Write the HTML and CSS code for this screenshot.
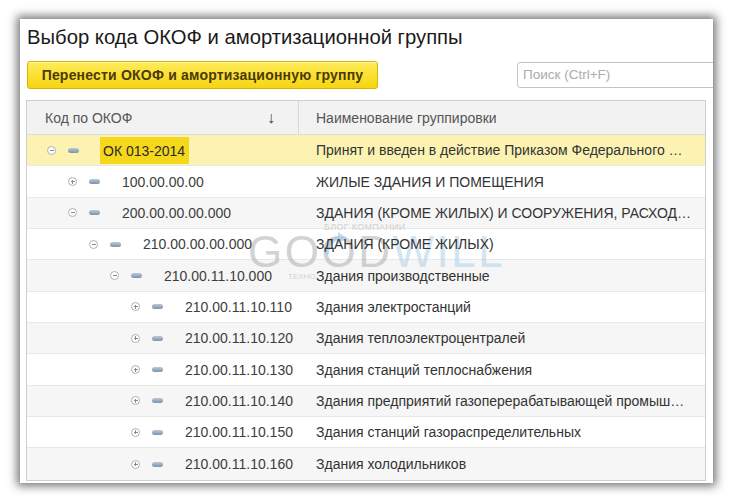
FILE: index.html
```html
<!DOCTYPE html>
<html lang="ru">
<head>
<meta charset="utf-8">
<title>Выбор кода ОКОФ</title>
<link rel="stylesheet" href="styles.css">
</head>
<body>
<div class="window">
  <h1 class="title">Выбор кода ОКОФ и амортизационной группы</h1>
  <div class="toolbar">
    <button class="btn-main">Перенести ОКОФ и амортизационную группу</button>
    <div class="search">Поиск (Ctrl+F)</div>
  </div>
  <div class="table">
    <div class="thead">
      <div class="th th-code"><span>Код по ОКОФ</span><span class="sort">↓</span></div>
      <div class="th th-name">Наименование группировки</div>
    </div>
    <div class="row sel">
      <div class="code lvl0"><span class="tg minus"></span><span class="pill"></span><span class="hl">ОК 013-2014</span></div>
      <div class="name"><span>Принят и введен в действие Приказом Федерального …</span></div>
    </div>
    <div class="row">
      <div class="code lvl1"><span class="tg plus"></span><span class="pill"></span><span class="txt">100.00.00.00</span></div>
      <div class="name"><span>ЖИЛЫЕ ЗДАНИЯ И ПОМЕЩЕНИЯ</span></div>
    </div>
    <div class="row alt">
      <div class="code lvl1"><span class="tg minus"></span><span class="pill"></span><span class="txt">200.00.00.00.000</span></div>
      <div class="name"><span>ЗДАНИЯ (КРОМЕ ЖИЛЫХ) И СООРУЖЕНИЯ, РАСХОД…</span></div>
    </div>
    <div class="row">
      <div class="code lvl2"><span class="tg minus"></span><span class="pill"></span><span class="txt">210.00.00.00.000</span></div>
      <div class="name"><span>ЗДАНИЯ (КРОМЕ ЖИЛЫХ)</span></div>
    </div>
    <div class="row alt">
      <div class="code lvl3"><span class="tg minus"></span><span class="pill"></span><span class="txt">210.00.11.10.000</span></div>
      <div class="name"><span>Здания производственные</span></div>
    </div>
    <div class="row">
      <div class="code lvl4"><span class="tg plus"></span><span class="pill"></span><span class="txt">210.00.11.10.110</span></div>
      <div class="name"><span>Здания электростанций</span></div>
    </div>
    <div class="row alt">
      <div class="code lvl4"><span class="tg plus"></span><span class="pill"></span><span class="txt">210.00.11.10.120</span></div>
      <div class="name"><span>Здания теплоэлектроцентралей</span></div>
    </div>
    <div class="row">
      <div class="code lvl4"><span class="tg plus"></span><span class="pill"></span><span class="txt">210.00.11.10.130</span></div>
      <div class="name"><span>Здания станций теплоснабжения</span></div>
    </div>
    <div class="row alt">
      <div class="code lvl4"><span class="tg plus"></span><span class="pill"></span><span class="txt">210.00.11.10.140</span></div>
      <div class="name"><span>Здания предприятий газоперерабатывающей промыш…</span></div>
    </div>
    <div class="row">
      <div class="code lvl4"><span class="tg plus"></span><span class="pill"></span><span class="txt">210.00.11.10.150</span></div>
      <div class="name"><span>Здания станций газораспределительных</span></div>
    </div>
    <div class="row alt">
      <div class="code lvl4"><span class="tg plus"></span><span class="pill"></span><span class="txt">210.00.11.10.160</span></div>
      <div class="name"><span>Здания холодильников</span></div>
    </div>
  </div>
  <div class="watermark">
    <div class="wm-top">БЛОГ КОМПАНИИ</div>
    <div class="wm-logo"><span class="wm-good">GOOD</span><span class="wm-will">WILL</span></div>
    <div class="wm-bottom">ТЕХНОЛОГИИ</div>
    <svg class="wm-arrow" width="24" height="24" viewBox="0 0 24 24">
      <path d="M3 22 C4 12 10 7 17 7" fill="none" stroke="#4a9be0" stroke-width="4" stroke-linecap="round"/>
      <path d="M14 1 L23 7 L14 13 Z" fill="#4a9be0"/>
    </svg>
  </div>
</div>
</body>
</html>
```

FILE: styles.css
```css
* { box-sizing: border-box; }
html, body { margin: 0; padding: 0; background: #fff; }
body {
  font-family: "Liberation Sans", Arial, sans-serif;
  color: #333;
  width: 733px;
  height: 503px;
  overflow: hidden;
}
.window {
  position: relative;
  margin: 19px 0 0 20px;
  width: 693px;
  height: 464px;
  background: #fff;
  overflow: hidden;
  box-shadow: 0 0 9px 3px rgba(0, 0, 0, 0.55);
  padding: 6px 7px 0 6px;
}
.title {
  margin: 0 0 0 1px;
  font-weight: normal;
  font-size: 20.25px;
  line-height: 24px;
  color: #1a1a1a;
}
.toolbar {
  display: flex;
  align-items: center;
  margin-top: 12px;
  height: 28px;
}
.btn-main {
  margin-left: 1px;
  width: 351px;
  height: 28px;
  border: 1px solid #d6b500;
  border-radius: 3px;
  background: linear-gradient(#ffec5a, #f6d510);
  font-family: "Liberation Sans", Arial, sans-serif;
  font-weight: bold;
  font-size: 14px;
  letter-spacing: 0.2px;
  color: #4a3a05;
  padding: 0;
  box-shadow: inset 0 1px 0 rgba(255,255,255,0.5);
}
.search {
  margin-left: auto;
  margin-right: -30px;
  width: 219px;
  height: 26px;
  border: 1px solid #c4c4c4;
  border-radius: 3px;
  font-size: 13.5px;
  color: #ababab;
  padding: 4px 0 0 5px;
}
.table {
  margin-top: 11px;
  border: 1px solid #cfcfcf;
  width: 680px;
}
.thead {
  display: grid;
  grid-template-columns: 271px 1fr;
  height: 34px;
  background: #f2f2f2;
  border-bottom: 1px solid #dcdcdc;
}
.th {
  display: flex;
  align-items: center;
  font-size: 14px;
  color: #555;
}
.th-code { padding-left: 18px; padding-right: 23px; justify-content: space-between; }
.th-name { border-left: 1px solid #d8d8d8; padding-left: 17px; }
.sort { font-size: 16px; color: #444; }
.row {
  display: grid;
  grid-template-columns: 271px 1fr;
  height: 31.35px;
  border-bottom: 1px solid #e8e8e8;
  background: #fff;
}
.row.alt { background: #f6f6f6; }
.row.sel { background: #fcf3b3; }
.row:last-child { border-bottom: none; }
.code {
  display: flex;
  align-items: center;
  font-size: 14px;
  color: #3d3d3d;
  white-space: nowrap;
}
.lvl0 { padding-left: 20px; }
.lvl1 { padding-left: 41px; }
.lvl2 { padding-left: 62px; }
.lvl3 { padding-left: 83px; }
.lvl4 { padding-left: 104px; }
.tg {
  position: relative;
  width: 9px;
  height: 9px;
  border: 1px solid #b0b0b0;
  border-radius: 50%;
  background: #fff;
  flex: none;
}
.tg::before {
  content: "";
  position: absolute;
  left: 1.5px;
  top: 3px;
  width: 4px;
  height: 1px;
  background: #8a8a8a;
}
.tg.plus::after {
  content: "";
  position: absolute;
  left: 3px;
  top: 1.5px;
  width: 1px;
  height: 4px;
  background: #8a8a8a;
}
.pill {
  margin-left: 12px;
  width: 11px;
  height: 5px;
  border-radius: 3px;
  background: linear-gradient(#b9cad9, #7d93aa);
  flex: none;
}
.txt { margin-left: 22px; position: relative; z-index: 2; }
.hl {
  position: relative;
  z-index: 2;
  margin-left: 21px;
  align-self: stretch;
  margin-top: 2px;
  margin-bottom: 1px;
  display: flex;
  align-items: center;
  padding: 0 4px 0 3px;
  background: #f5d71c;
  color: #2a2a2a;
}
.name {
  padding-left: 18px;
  display: flex;
  align-items: center;
  font-size: 14px;
  color: #333;
  white-space: nowrap;
  overflow: hidden;
}
.name span { position: relative; z-index: 2; }
.watermark {
  position: absolute;
  z-index: 1;
  left: 228px;
  top: 203px;
  pointer-events: none;
  opacity: 0.5;
}
.wm-top {
  margin-left: 76px;
  font-size: 9px;
  color: #b0b0b0;
  letter-spacing: 0.3px;
}
.wm-logo {
  font-size: 44px;
  line-height: 40px;
  letter-spacing: 2.5px;
}
.wm-good { color: #a9a9a9; }
.wm-will { color: #a6cde8; }
.wm-bottom {
  margin-left: 40px;
  width: 27px;
  overflow: hidden;
  font-size: 8px;
  color: #b0b0b0;
}
.wm-arrow {
  position: absolute;
  left: 76px;
  top: 9px;
  opacity: 0.7;
}
```
